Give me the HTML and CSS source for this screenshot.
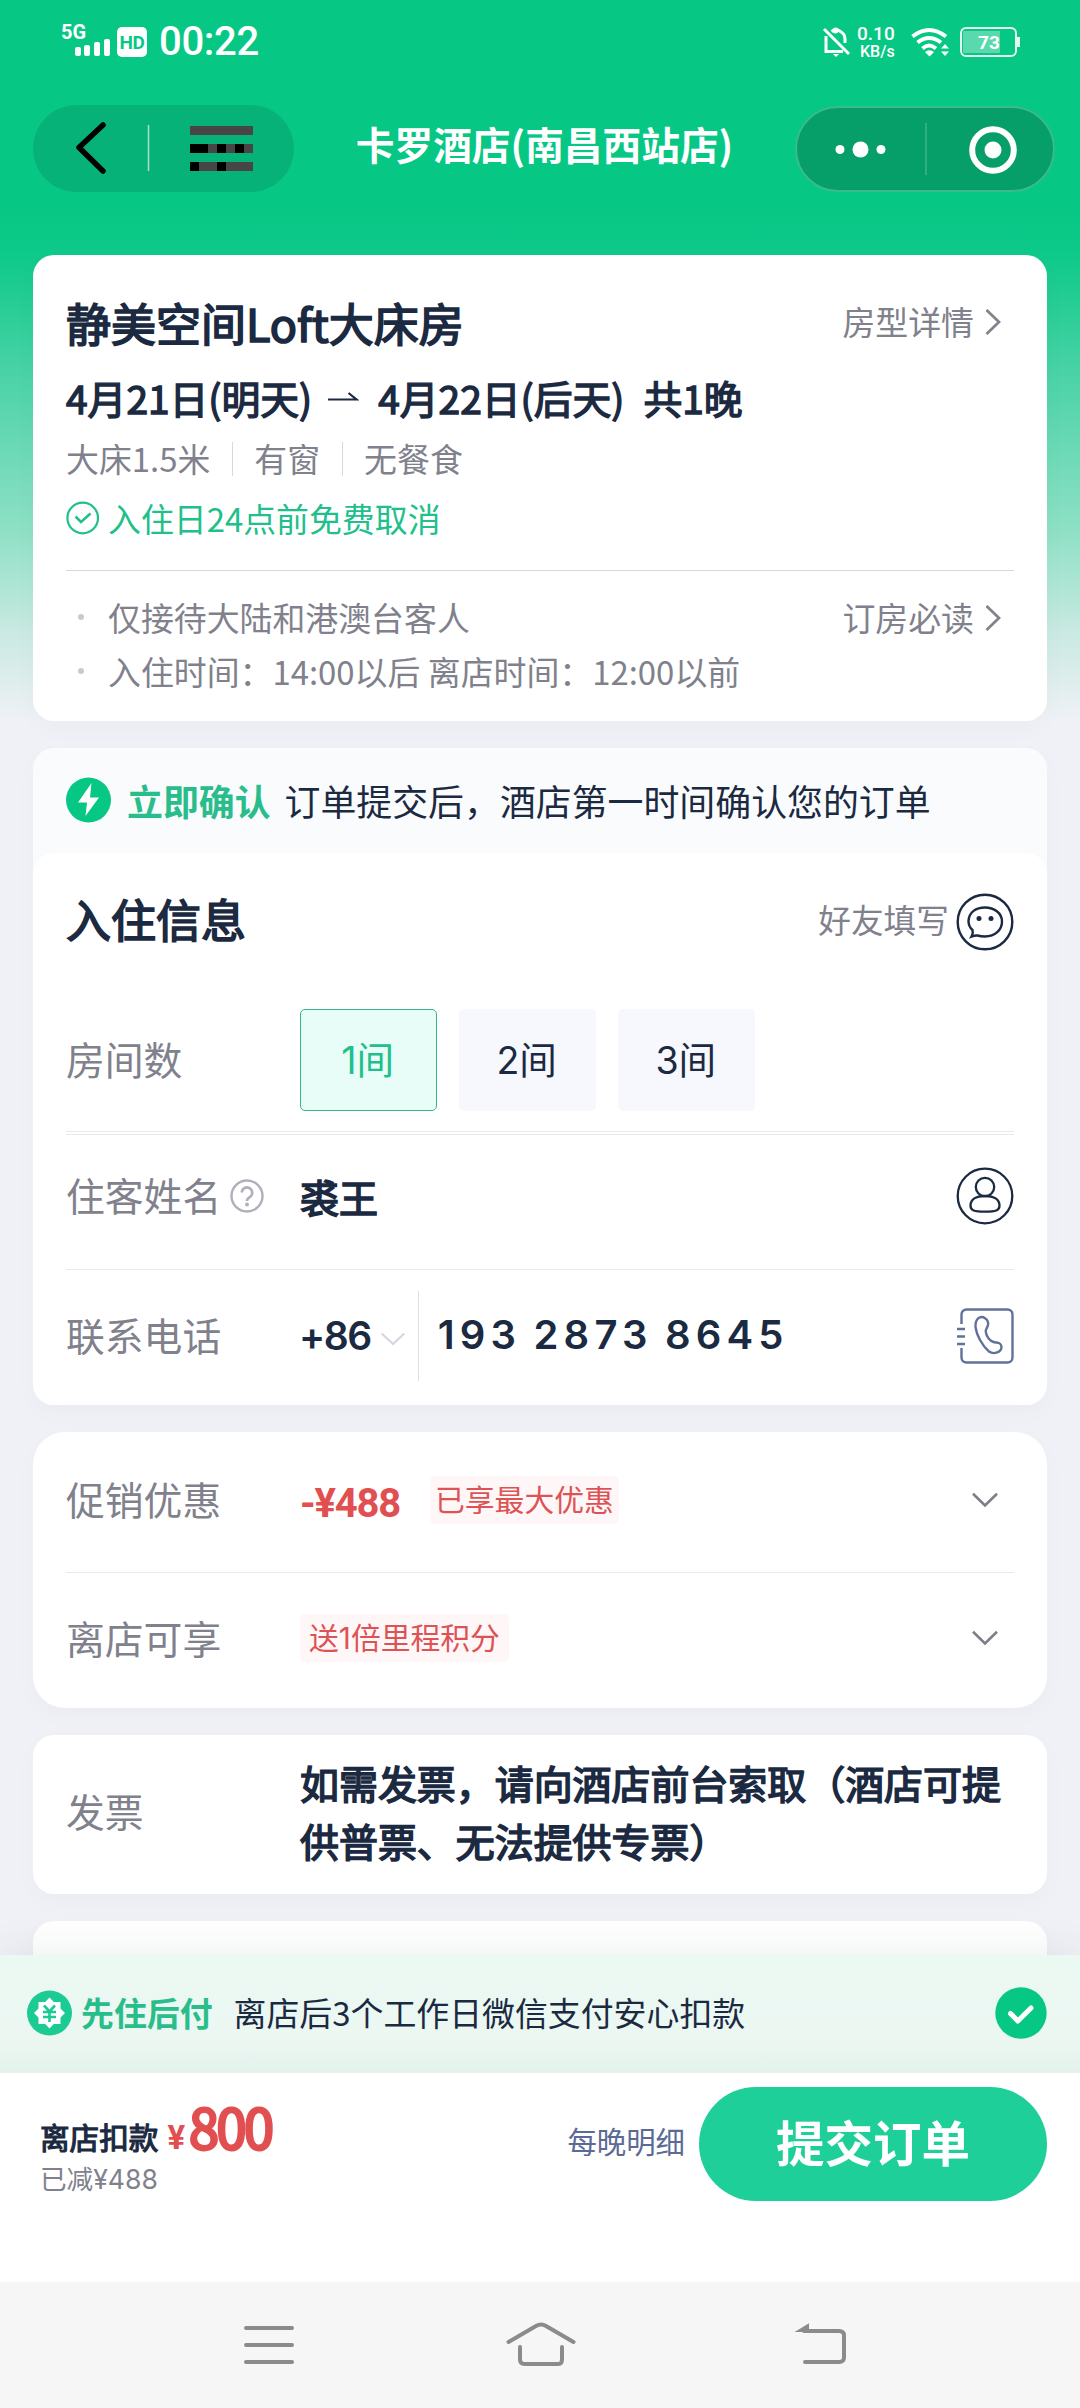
FILE: index.html
```html
<!DOCTYPE html>
<html lang="zh-CN">
<head>
<meta charset="utf-8">
<title>卡罗酒店(南昌西站店)</title>
<link rel="stylesheet" href="styles.css">
</head>
<body>
<div class="screen">
  <div class="page">
    <div class="statusbar">
      <div class="status-left">
        <svg class="signal" width="50" height="36" viewBox="0 0 50 36" fill="#fff">
          <text x="-1" y="17.500" font-size="20" class="net">5G</text>
          <rect x="13" y="26" width="6" height="9" rx="2"/><rect x="22" y="24" width="6" height="11" rx="2"/><rect x="32" y="21" width="6" height="14" rx="2"/><rect x="42" y="18" width="6" height="17" rx="2"/>
        </svg>
        <span class="hd">HD</span>
        <span class="clock">00:22</span>
      </div>
      <div class="status-right">
        <svg width="28" height="32" viewBox="0 0 28 32" fill="none" stroke="#fff" stroke-width="3">
          <path d="M2 2 L27 27"/><path d="M4 9V24.500H21"/><path d="M9.500 4.500Q14 1 18.500 4.500Q23 7 23 12V16"/><path d="M11 27h6l-3 3z" fill="#fff" stroke="none"/><circle cx="13.500" cy="3.500" r="3" fill="#fff" stroke="none"/>
        </svg>
        <span class="speed"><b>0.10</b><i>KB/s</i></span>
        <svg width="40" height="32" viewBox="0 0 40 32" fill="none" stroke="#fff" stroke-width="4">
          <path d="M1.500 9.500Q18 -3.500 35 9.500"/><path d="M6.500 15.500Q18 6.500 30 15.500"/><path d="M11.500 21.500Q18 15.500 25 21.500"/>
          <path d="M14 25q4.500-3.500 9 0l-4.500 4.500zM30 21.500l4-4.500 4 4.500zM30 24.500h8l-4 4.500z" fill="#fff" stroke="none"/>
        </svg>
        <span class="battery">73</span>
      </div>
    </div>

    <div class="navbar">
      <div class="capsule capsule-left">
        <svg width="261" height="87" viewBox="0 0 261 87">
          <path d="M70 20 46 42.500 70 66" fill="none" stroke="#000" stroke-width="5.500" stroke-linecap="round" stroke-linejoin="round"/>
          <path d="M115.500 20v46" stroke="#a9dfca" stroke-width="1.500"/>
          <path d="M157 25.500h63M157 43.500h63M157 61.500h63" stroke="#484545" stroke-width="9"/>
          <path d="M157 43.500h18M184 43.500h9M202 43.500h9M157 61.500h9M184 61.500h9" stroke="#000" stroke-width="9"/>
        </svg>
      </div>
      <h1 class="hotel">卡罗酒店(南昌西站店)</h1>
      <div class="capsule capsule-right">
        <svg width="257" height="83" viewBox="0 0 257 83" fill="#fff">
          <circle cx="43" cy="41.500" r="4.500"/><circle cx="63.500" cy="41.500" r="8"/><circle cx="84" cy="41.500" r="4.500"/>
          <path d="M129 15v52" stroke="#3fb58c" stroke-width="1.500"/>
          <circle cx="196" cy="42" r="20.800" fill="none" stroke="#fff" stroke-width="6"/><circle cx="196" cy="42" r="8.500"/>
        </svg>
      </div>
    </div>

    <section class="card room">
      <div class="split room-head"><h2 class="heading">静美空间Loft大床房</h2>
        <a class="link">房型详情<svg width="16" height="28" viewBox="0 0 16 28"><path d="M1.500 2 14 14 1.500 26" fill="none" stroke="#80818c" stroke-width="2.700"/></svg></a></div>
      <div class="dates"><span>4月21日(明天)</span>
        <svg width="32" height="14" viewBox="0 0 32 14"><path d="M1 9.500H29.500L21.500 3" fill="none" stroke="#1b2a41" stroke-width="2.200"/></svg>
        <span>4月22日(后天)</span><span class="nights">共1晚</span></div>
      <div class="meta"><span>大床1.5米</span><span>有窗</span><span>无餐食</span></div>
      <div class="cancel"><svg width="34" height="34" viewBox="0 0 34 34" fill="none" stroke="#20bf8b" stroke-width="2.200"><circle cx="16.700" cy="17" r="15.300"/><path d="M9.500 15.500 15 21 24.500 12.500" stroke-width="2.500"/></svg>入住日24点前免费取消</div>
      <div class="rules">
        <div class="rule split"><span>仅接待大陆和港澳台客人</span><a class="link">订房必读<svg width="16" height="28" viewBox="0 0 16 28"><path d="M1.500 2 14 14 1.500 26" fill="none" stroke="#80818c" stroke-width="2.700"/></svg></a></div>
        <div class="rule"><span>入住时间：14:00以后 离店时间：12:00以前</span></div>
      </div>
    </section>

    <section class="card booking">
      <div class="banner">
        <svg width="46" height="46" viewBox="0 0 46 46"><circle cx="22.500" cy="23" r="22.500" fill="#07c785"/><path d="M25.500 6 12 25.500h9L19.500 39 33 20.500h-9z" fill="#fff"/></svg>
        <b>立即确认</b><span>订单提交后，酒店第一时间确认您的订单</span>
      </div>
      <div class="form">
        <div class="split form-head"><h2 class="heading">入住信息</h2>
          <div class="friend">好友填写<svg width="58" height="58" viewBox="0 0 58 58" fill="none" stroke="#1b2a41" stroke-width="2.400"><circle cx="29" cy="29" r="27.300"/><path d="M15.500 43.500Q17.500 40 16.500 37Q12.500 33.500 12.500 28C13 19 20 14.500 29 14.500S46 20 46 28.500S39 43.500 29 43.500Q25 43.500 21.500 42.500Q19 42.300 15.500 43.500Z"/><circle cx="23" cy="25.500" r="2.500" fill="#1b2a41" stroke="none"/><circle cx="35" cy="25.500" r="2.500" fill="#1b2a41" stroke="none"/></svg></div></div>
        <div class="row rooms"><span class="label">房间数</span><div class="choices"><button class="choice on">1间</button><button class="choice">2间</button><button class="choice">3间</button></div></div>
        <div class="row guest"><span class="label">住客姓名<svg width="34" height="34" viewBox="0 0 34 34"><circle cx="17" cy="17" r="15.500" fill="none" stroke="#afb0bb" stroke-width="2.400"/><path d="M11.800 13.500a5.200 5.200 0 1 1 8.200 4.400c-2.300 1.500-3 2.300-3 4" fill="none" stroke="#afb0bb" stroke-width="2.600"/><circle cx="17" cy="25.500" r="2" fill="#afb0bb"/></svg></span>
          <span class="value">裘王</span>
          <svg class="end" width="58" height="58" viewBox="0 0 58 58" fill="none" stroke="#1b2a41" stroke-width="2.300"><circle cx="29" cy="29" r="27.300"/><circle cx="29" cy="20" r="9.200"/><path d="M29 29C21 29 14.500 32 14.500 38.500C14.500 43.500 18 44.700 29 44.700S43.500 43.500 43.500 38.500C43.500 32 37 29 29 29Z"/></svg></div>
        <div class="row phone"><span class="label">联系电话</span>
          <span class="code">+86</span><svg class="drop" width="24" height="14" viewBox="0 0 24 14"><path d="M.700 1.500 12 12 23.300 1.500" fill="none" stroke="#d5d7df" stroke-width="2.200"/></svg>
          <span class="number">193 2873 8645</span>
          <svg class="end book" width="58" height="58" viewBox="0 0 58 58" fill="none" stroke="#62719a" stroke-width="2.400"><path d="M5.500 17V7.500a5 5 0 0 1 5-5H51.500a5 5 0 0 1 5 5V50.500a5 5 0 0 1-5 5H10.500a5 5 0 0 1-5-5V41"/><path d="M1 22h8M1 29.500h8M1 37h8" /><path d="M22 11.500C26.500 8 33 12 32 18C31.200 21.500 29.500 21.500 29.800 25C30.500 30 34 34 37.500 35C40.500 36 45 34.500 45.500 40C45.500 45 38 48 33 44.500C26 38.500 20.500 28 19.500 20C19.300 16 20 13.500 22 11.500Z"/></svg></div>
      </div>
    </section>

    <section class="card perks">
      <div class="row promo"><span class="label">促销优惠</span><span class="discount">-¥488</span><span class="tag">已享最大优惠</span><svg class="end down" width="26" height="16" viewBox="0 0 26 16"><path d="M1 1.800 13 13.500 25 1.800" fill="none" stroke="#7c7e89" stroke-width="2.600"/></svg></div>
      <div class="row points"><span class="label">离店可享</span><span class="tag">送1倍里程积分</span><svg class="end down" width="26" height="16" viewBox="0 0 26 16"><path d="M1 1.800 13 13.500 25 1.800" fill="none" stroke="#7c7e89" stroke-width="2.600"/></svg></div>
    </section>

    <section class="card row invoice"><span class="label">发票</span><p class="value">如需发票，请向酒店前台索取（酒店可提供普票、无法提供专票）</p></section>
    <section class="card next"></section>
  </div>

  <footer class="footer">
    <div class="paylater">
      <svg width="46" height="46" viewBox="0 0 46 46"><circle cx="22.500" cy="23" r="22.500" fill="#1ccb94"/><path d="M22.500 7.500 26.800 12H33.500V18.500L38 23 33.500 27.500V34H26.800L22.500 38.500 18.200 34H11.500V27.500L7 23 11.500 18.500V12H18.200Z" fill="#fff"/><path d="M17 15.500 22.500 21.500 28 15.500M16 22h13M16 27h13M22.500 21.500V32" fill="none" stroke="#1ccb94" stroke-width="2.600"/></svg>
      <b>先住后付</b><span>离店后3个工作日微信支付安心扣款</span>
      <svg class="end" width="52" height="52" viewBox="0 0 52 52"><circle cx="26" cy="26" r="25.700" fill="#07c785"/><path d="M15.500 26.500 22.800 34 36 21" fill="none" stroke="#fff" stroke-width="5" stroke-linecap="round" stroke-linejoin="round"/></svg>
    </div>
    <div class="checkout">
      <div class="total"><div class="sum"><b>离店扣款</b><i>¥</i><strong>800</strong></div><div class="saved">已减¥488</div></div>
      <a class="detail">每晚明细</a><button class="submit">提交订单</button>
    </div>
    <div class="sysnav">
      <svg width="54" height="50" viewBox="0 0 54 50" stroke="#8b8b8b" stroke-width="4" stroke-linecap="round"><path d="M4 8h46M4 25h46M4 42h46"/></svg>
      <svg class="home" width="74" height="50" viewBox="0 0 74 50" fill="none" stroke="#8b8b8b" stroke-width="4" stroke-linecap="round"><path d="M4.500 22 32 6Q37 3 42 6L69.500 22"/><path d="M16 27V39.500Q16 44 20.500 44H54.500Q58 44 58 39.500V27"/></svg>
      <svg width="54" height="50" viewBox="0 0 54 50" fill="none" stroke="#8b8b8b" stroke-width="4" stroke-linecap="round"><path d="M10 11H45Q50 11 50 15.500V37.500Q50 42 45 42H11"/><path d="M4 11 14 5V11Z" fill="#8b8b8b" stroke-width="2"/></svg>
    </div>
  </footer>
</div>
</body>
</html>
```
FILE: styles.css
```css
* { box-sizing: border-box; margin: 0; padding: 0; }
body { width: 1080px; font-family: "Noto Sans CJK SC", sans-serif; color: #1b2a41; }
svg { display: block; flex: none; }
b, i, strong { font-style: normal; font-weight: 400; }
button { border: 0; font-family: inherit; }
.screen { height: 2408px; display: flex; flex-direction: column; overflow: hidden; background: #f0f1f6; }
.page { flex: 1; min-height: 0; overflow: hidden; background: linear-gradient(#07c785 210px, #0ec989 255px, #4dd3a8 380px, #8ee0c5 530px, #c8e9e1 630px, #f0f1f6 722px); }

/* status bar */
.statusbar { height: 84px; padding: 0 63px 0 62px; display: flex; justify-content: space-between; color: #fff; font-family: Roboto, sans-serif; }
.status-left { display: flex; padding-top: 21px; }
.net { font: 700 20px Roboto, sans-serif; }
.hd { width: 30px; height: 30px; margin: 6px 12px 0 5px; border-radius: 5px; background: #fff; color: #07c785; font: 700 19px/31px Roboto, sans-serif; text-align: center; letter-spacing: -.5px; }
.clock { font-size: 40px; font-weight: 500; line-height: 42px; letter-spacing: -.3px; }
.status-right { display: flex; padding-top: 27px; }
.speed { display: flex; flex-direction: column; width: 44px; margin: -2px 10px 0 7px; }
.speed b { font-size: 19px; line-height: 18px; font-weight: 500; }
.speed i { font-size: 16px; line-height: 18px; padding-left: 3px; font-weight: 500; }
.battery { position: relative; width: 57px; height: 30px; margin-left: 9px; border: 2px solid #e3f8f0; border-radius: 6px; background: linear-gradient(#5ad9ae, #5ad9ae) 1px 2px / 37px 22px no-repeat; font-size: 19px; font-weight: 700; line-height: 27px; padding-left: 16px; }
.battery::after { content: ""; position: absolute; right: -5px; top: 8px; width: 3px; height: 10px; background: #e3f8f0; }

/* title bar */
.navbar { height: 171px; padding: 21px 25px 0 33px; display: flex; justify-content: space-between; align-items: flex-start; }
.capsule-left { width: 261px; height: 87px; border-radius: 44px; background: #07b279; }
.capsule-right { width: 260px; height: 86px; margin-top: 1px; border: 2px solid #38bb8f; border-radius: 43px; background: #069f6a; }
.hotel { font-size: 38.700px; font-weight: 700; line-height: 56px; margin-top: 10px; color: #fff; white-space: nowrap; }

.card { width: 1014px; margin: 0 auto 27px; border-radius: 21px; background: #fff; box-shadow: 0 8px 24px rgba(40, 40, 80, .025); }
.split { display: flex; justify-content: space-between; }
.heading { padding-top: 2px; font-size: 45px; font-weight: 400; line-height: 60px; -webkit-text-stroke: 1.700px currentColor; }
.link { display: flex; align-items: center; gap: 11px; margin-right: 13px; line-height: 40px; }
.link svg { margin-top: 1px; }

/* room summary */
.room { height: 466px; padding: 36px 33px 0; font-size: 32.900px; color: #80818c; line-height: 40px; }
.room-head { height: 60px; }
.room-head .heading { color: #1b2a41; }
.room-head .link { line-height: 60px; }
.dates { display: flex; align-items: center; margin-top: 19px; height: 54px; font-size: 38.850px; color: #1b2a41; -webkit-text-stroke: 1.400px currentColor; white-space: nowrap; }
.dates svg { margin: 0 19px 0 15px; }
.nights { margin-left: 19px; }
.meta { display: flex; margin-top: 14px; }
.meta span { position: relative; margin-right: 44px; }
.meta span:not(:last-child)::after { content: ""; position: absolute; right: -23px; top: 4px; width: 1px; height: 34px; background: #d8d9df; }
.cancel { display: flex; align-items: center; gap: 8px; margin: 20px 0 32px; color: #20bf8b; }
.rules { border-top: 1px solid #d6d7db; padding-top: 26px; display: flex; flex-direction: column; gap: 14px; }
.rule { position: relative; padding-left: 42px; height: 40px; }
.rule::before { content: ""; position: absolute; left: 12px; top: 17px; width: 6px; height: 6px; border-radius: 50%; background: #c9cacf; }

/* guest form */
.booking { background: #fafbfd; }
.banner { height: 105px; padding: 0 33px 2px; display: flex; align-items: center; font-size: 35.900px; white-space: nowrap; }
.banner b { margin: 0 14px 0 15px; font-weight: 700; color: #2abd8c; }
.form { height: 552px; padding: 0 33px; border-radius: 21px; background: #fff; }
.form-head { height: 130px; align-items: center; }
.friend { display: flex; align-items: center; gap: 7px; font-size: 32.700px; color: #80818c; }
.friend svg { margin-top: 8px; }
.row { display: flex; align-items: center; }
.label { flex: none; width: 234px; padding-bottom: 3px; display: flex; align-items: center; gap: 9px; font-size: 38.800px; color: #80818c; }
.label svg { margin-top: 4px; }
.end { margin-left: auto; }
.rooms { height: 152px; padding-top: 5px; border-bottom: 4px double #e9e9ec; }
.choices { display: flex; gap: 21.900px; }
.choice { width: 137.200px; height: 102px; padding: 0 2px 5px 0; border-radius: 5px; background: #f7f8fd; color: #1b2a41; font: 400 37.500px Inter, "Noto Sans CJK SC", sans-serif; }
.choice.on { background: #e8fdf7; border: 1px solid #35b58a; color: #20bf8b; }
.guest { height: 135px; padding-bottom: 13px; border-bottom: 1px solid #e9e9ec; }
.value { font-size: 39px; -webkit-text-stroke: 1.600px currentColor; }
.phone { height: 135px; padding-bottom: 4px; }
.code, .number { font-family: Inter, sans-serif; font-weight: 600; font-size: 40px; }
.code { margin-left: -1px; font-size: 39px; letter-spacing: -1.500px; }
.drop { margin: 6px 13px 0 10px; }
.number { height: 90px; line-height: 88px; padding-left: 19px; border-left: 1px solid #e0e1e6; letter-spacing: 5.200px; word-spacing: -3px; white-space: nowrap; }

/* offers */
.perks { height: 276px; padding: 0 33px; border-radius: 32px; }
.promo { height: 141px; padding-bottom: 5px; border-bottom: 1px solid #e9e9ec; }
.points { height: 135px; padding-bottom: 5px; }
.discount { width: 130px; padding-top: 9px; font: 700 40px/50px Roboto, sans-serif; letter-spacing: -1.200px; color: #e24f50; }
.tag { height: 48px; padding: 0 9px; border-radius: 5px; background: #fff7f7; color: #dd5355; font: 400 29.800px/49px Inter, "Noto Sans CJK SC", sans-serif; }
.promo .tag { padding: 0 5px; }
.down { margin-right: 16px; }
.invoice { height: 159px; padding: 0 33px 7px; }
.invoice .value { line-height: 58px; width: 713px; font-size: 38.950px; }
.next { height: 120px; }

/* footer */
.footer { position: relative; flex: none; box-shadow: 0 -4px 36px rgba(30, 60, 50, .08); }
.paylater { height: 118px; padding: 0 33px 2px 27px; display: flex; align-items: center; background: linear-gradient(#ebf9f3, #ecf7f2 70%, #e4f2ec); font-size: 32.900px; }
.paylater b { margin: 0 21px 0 8px; font-weight: 700; color: #2abd8c; }
.paylater b, .paylater span { padding-bottom: 3px; }
.checkout { height: 209px; padding: 0 33px 0 40px; display: flex; align-items: flex-start; background: #fff; }
.total { flex: 1; padding-top: 23px; }
.sum { display: flex; align-items: baseline; line-height: 60px; height: 60px; white-space: nowrap; }
.sum b { font-size: 29.600px; -webkit-text-stroke: 1.200px currentColor; }
.sum i { margin-left: 9px; font: 700 33px/60px Roboto, sans-serif; color: #e24f50; }
.sum strong { margin-left: 4px; font-size: 54px; color: #e24f50; letter-spacing: -2.500px; -webkit-text-stroke: 2.800px currentColor; }
.saved { margin-top: 4px; font: 400 26.600px/38px Inter, "Noto Sans CJK SC", sans-serif; color: #80818c; }
.detail { margin: 45px 14px 0 0; font-size: 29.400px; line-height: 44px; color: #5c6a96; }
.submit { width: 348px; height: 114px; margin-top: 14px; padding-bottom: 7px; border-radius: 57px; background: #1fcf99; color: #fff; font-size: 48.500px; font-weight: 700; }
.sysnav { height: 126px; padding: 0 232px 0 242px; display: flex; justify-content: space-between; align-items: center; background: #f6f6f6; }
.home { margin-right: 9px; }
```
